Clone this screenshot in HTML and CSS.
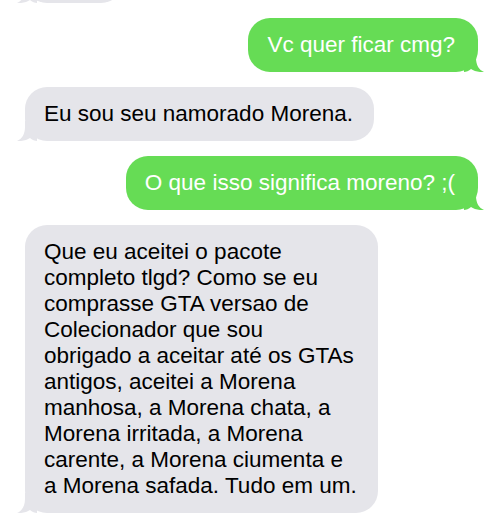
FILE: index.html
```html
<!DOCTYPE html>
<html lang="pt">
<head>
<meta charset="utf-8">
<title>Mensagens</title>
<link rel="stylesheet" href="styles.css">
</head>
<body>
<div class="chat">
  <div class="bubble received stub"><svg class="tail" viewBox="0 0 20 20"><path d="M20 0H8V6C8 13 5 18 0 20C5 20.5 10 19 13 17C15 19 18 20 20 20Z"/></svg></div>
  <div class="bubble sent">Vc quer ficar cmg?<svg class="tail" viewBox="0 0 20 20"><path d="M0 0H12V6C12 13 15 18 20 20C15 20.5 10 19 7 17C5 19 2 20 0 20Z"/></svg></div>
  <div class="bubble received">Eu sou seu namorado Morena.<svg class="tail" viewBox="0 0 20 20"><path d="M20 0H8V6C8 13 5 18 0 20C5 20.5 10 19 13 17C15 19 18 20 20 20Z"/></svg></div>
  <div class="bubble sent">O que isso significa moreno? ;(<svg class="tail" viewBox="0 0 20 20"><path d="M0 0H12V6C12 13 15 18 20 20C15 20.5 10 19 7 17C5 19 2 20 0 20Z"/></svg></div>
  <div class="bubble received">Que eu aceitei o pacote<br>completo tlgd? Como se eu<br>comprasse GTA versao de<br>Colecionador que sou<br>obrigado a aceitar até os GTAs<br>antigos, aceitei a Morena<br>manhosa, a Morena chata, a<br>Morena irritada, a Morena<br>carente, a Morena ciumenta e<br>a Morena safada. Tudo em um.<svg class="tail" viewBox="0 0 20 20"><path d="M20 0H8V6C8 13 5 18 0 20C5 20.5 10 19 13 17C15 19 18 20 20 20Z"/></svg></div>
</div>
</body>
</html>
```
FILE: styles.css
```css
html, body {
  margin: 0;
  padding: 0;
  background: #ffffff;
  overflow: hidden;
}

body {
  width: 500px;
  height: 520px;
  font-family: "Liberation Sans", Arial, sans-serif;
}

.chat {
  display: flex;
  flex-direction: column;
  gap: 15px;
  padding: 0 22px 0 25px;
  margin-top: -51px;
}

.bubble {
  position: relative;
  font-size: 22.5px;
  line-height: 26px;
  padding: 14px 21px 14px 19px;
  border-radius: 22px;
  max-width: 340px;
  white-space: nowrap;
}

.bubble .tail {
  position: absolute;
  bottom: 0;
  width: 20px;
  height: 20px;
}

.stub {
  width: 58px;
  height: 26px;
}

.received {
  align-self: flex-start;
  background: #e5e5ea;
  color: #000000;
}

.received .tail {
  left: -8px;
  fill: #e5e5ea;
}

.sent {
  align-self: flex-end;
  background: #66dc55;
  color: #ffffff;
  padding-right: 23px;
}

.sent .tail {
  right: -6px;
  fill: #66dc55;
}
```
